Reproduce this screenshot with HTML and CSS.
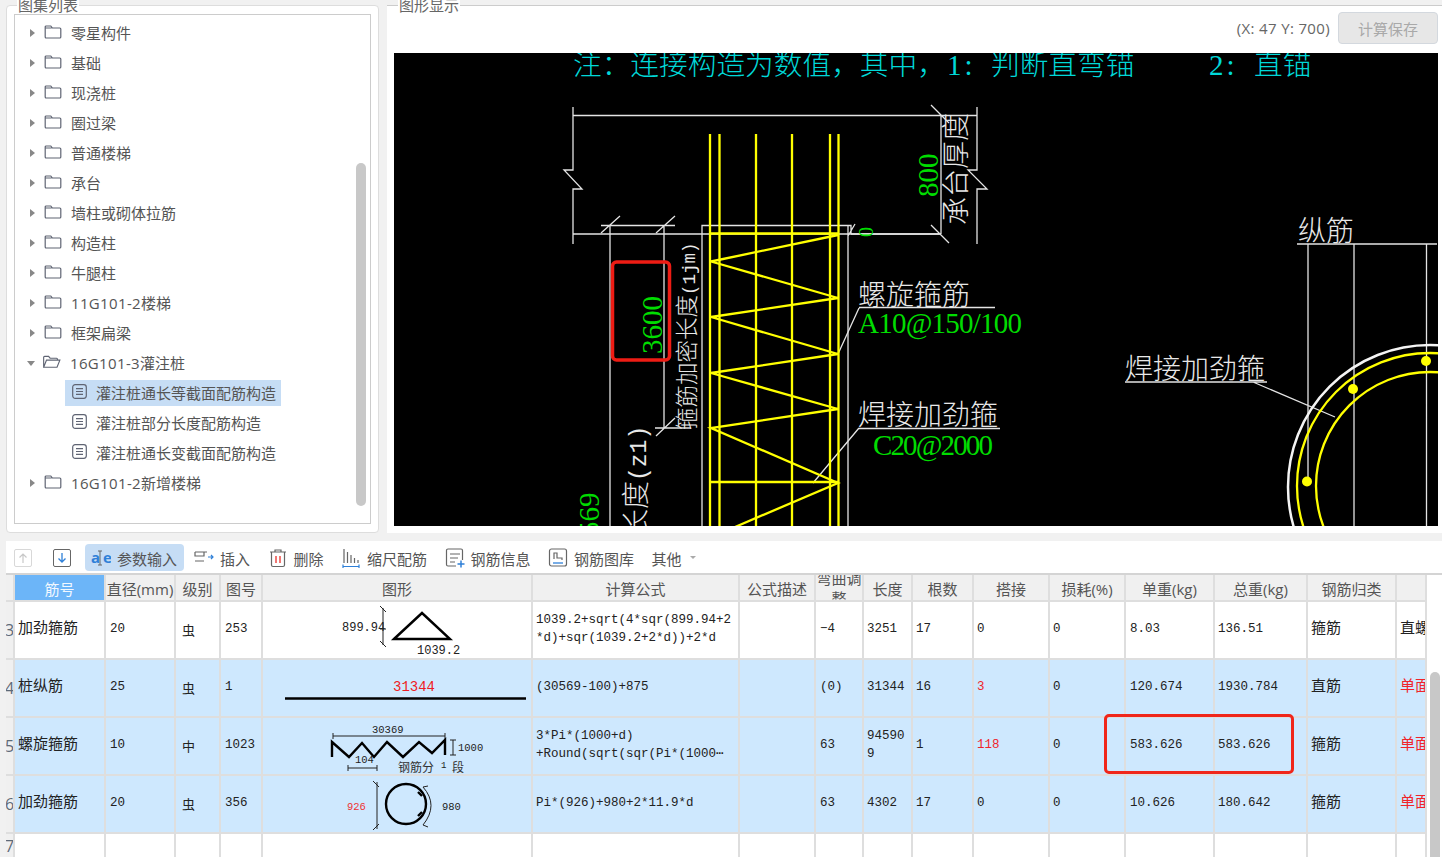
FILE: index.html
```html
<!DOCTYPE html>
<html lang="zh">
<head>
<meta charset="utf-8">
<title>图集列表</title>
<link rel="stylesheet" href="styles.css">
</head>
<body>
<svg class="sprite" width="0" height="0">
  <symbol id="folder" viewBox="0 0 17 14"><path d="M.7 2a1 1 0 0 1 1-1h4.600l1.600 2h7.400a1 1 0 0 1 1 1v8a1 1 0 0 1-1 1H1.700a1 1 0 0 1-1-1zM.7 3h6.500" fill="none" stroke="#5f6473" stroke-width="1.200"/></symbol>
  <symbol id="folder-open" viewBox="0 0 19 14"><path d="M.7 12V2a1 1 0 0 1 1-1h4.200l1.600 2h6.800a1 1 0 0 1 1 1v1M.7 12.500l3-7.500H17.800l-3 7.500z" fill="none" stroke="#5f6473" stroke-width="1.200"/></symbol>
  <symbol id="doc" viewBox="0 0 15 15"><rect x=".7" y=".7" width="13.600" height="13.600" rx="2.500" fill="none" stroke="#5f6473" stroke-width="1.200"/><path d="M4 4.700h7M4 7.500h7M4 10.300h7" stroke="#5f6473" stroke-width="1.200"/></symbol>
</svg>

<div class="top">
  <section class="panel list-panel">
    <h2 class="legend legend-list">图集列表</h2>
    <div class="tree">
      <div class="node"><span class="arrow"></span><svg class="ico-folder"><use href="#folder"/></svg><span class="label">零星构件</span></div>
      <div class="node"><span class="arrow"></span><svg class="ico-folder"><use href="#folder"/></svg><span class="label">基础</span></div>
      <div class="node"><span class="arrow"></span><svg class="ico-folder"><use href="#folder"/></svg><span class="label">现浇桩</span></div>
      <div class="node"><span class="arrow"></span><svg class="ico-folder"><use href="#folder"/></svg><span class="label">圈过梁</span></div>
      <div class="node"><span class="arrow"></span><svg class="ico-folder"><use href="#folder"/></svg><span class="label">普通楼梯</span></div>
      <div class="node"><span class="arrow"></span><svg class="ico-folder"><use href="#folder"/></svg><span class="label">承台</span></div>
      <div class="node"><span class="arrow"></span><svg class="ico-folder"><use href="#folder"/></svg><span class="label">墙柱或砌体拉筋</span></div>
      <div class="node"><span class="arrow"></span><svg class="ico-folder"><use href="#folder"/></svg><span class="label">构造柱</span></div>
      <div class="node"><span class="arrow"></span><svg class="ico-folder"><use href="#folder"/></svg><span class="label">牛腿柱</span></div>
      <div class="node"><span class="arrow"></span><svg class="ico-folder"><use href="#folder"/></svg><span class="label"><span class="latin">11G101-2</span>楼梯</span></div>
      <div class="node"><span class="arrow"></span><svg class="ico-folder"><use href="#folder"/></svg><span class="label">框架扁梁</span></div>
      <div class="node"><span class="arrow arrow-open"></span><svg class="ico-folder"><use href="#folder-open"/></svg><span class="label"><span class="latin">16G101-3</span>灌注桩</span></div>
      <div class="leaf"><span class="leaf-box selected"><svg class="ico-doc"><use href="#doc"/></svg><span class="label">灌注桩通长等截面配筋构造</span></span></div>
      <div class="leaf"><span class="leaf-box"><svg class="ico-doc"><use href="#doc"/></svg><span class="label">灌注桩部分长度配筋构造</span></span></div>
      <div class="leaf"><span class="leaf-box"><svg class="ico-doc"><use href="#doc"/></svg><span class="label">灌注桩通长变截面配筋构造</span></span></div>
      <div class="node"><span class="arrow"></span><svg class="ico-folder"><use href="#folder"/></svg><span class="label"><span class="latin">16G101-2</span>新增楼梯</span></div>
      <div class="tree-thumb"></div>
    </div>
  </section>

  <section class="panel-view">
    <h2 class="legend legend-view">图形显示</h2>
    <div class="view-bar">
      <span class="coord">(X: 47 Y: 700)</span>
      <button class="save" type="button">计算保存</button>
    </div>
    <svg class="canvas" viewBox="394 53 1044 473" width="1044" height="473">
      <g class="ln">
        <path d="M573 107V170H564L582 189H573V244M573 115.500H977M573 234H941M977 107V170H968L987 189H977V244M941 115V234M931 105L949 123M931 225L949 243"/>
        <path d="M601 225.500H675M610 225V526M664 225V428M601 233L620 216M656 233L675 216M655 428H691M656 436L675 418"/>
        <path d="M702 526V225.500H851V234M848 226V526M848 236L855 224M851 234H941"/>
        <path d="M859 307.500H995M859 308L838 354M859 428.500H1000M859 428L813 483"/>
        <path d="M1297 244H1437M1308 244V481M1354 244V526M1426.500 244V526M1125 382H1267M1253 382L1335 417"/>
      </g>
      <g class="yl">
        <path d="M710 134V526M719.500 134V526M756 134V526M792 134V526M830 134V526M838.500 134V526M710 233.500H838.500M710 482H838.500"/>
        <path d="M838 235L711 261.500L838 298L711 317L838 354L711 373L838 409L711 428L838 483L735 527"/>
        <circle cx="1430" cy="486" r="133"/>
        <circle cx="1430" cy="486" r="114"/>
      </g>
      <circle class="wh" cx="1430" cy="487" r="142"/>
      <circle class="dot" cx="1307" cy="481.500" r="5"/>
      <circle class="dot" cx="1353" cy="389" r="5"/>
      <circle class="dot" cx="1426" cy="361" r="5"/>

      <text class="t-cy" x="573" y="75">注&#xFF1A;连接构造为数值&#xFF0C;其中&#xFF0C;</text>
      <text class="t-cy t-cy-num" x="947" y="75">1:</text>
      <text class="t-cy" x="991" y="75">判断直弯锚</text>
      <text class="t-cy t-cy-num" x="1209" y="75">2:</text>
      <text class="t-cy" x="1254" y="75">直锚</text>

      <text class="t-gr" transform="translate(938 197) rotate(-90)">800</text>
      <text class="t-gr" transform="translate(662 354) rotate(-90)">3600</text>
      <text class="t-gr" transform="translate(599 565) rotate(-90)">30569</text>
      <text class="t-gr t-zero" transform="translate(873 237) rotate(-90)">0</text>
      <text class="t-gr" x="858" y="333" textLength="164">A10@150/100</text>
      <text class="t-gr" x="873" y="455" textLength="120">C20@2000</text>

      <text class="t-wh" transform="translate(966 225) rotate(-90)">承台厚度</text>
      <text class="t-wh t-22" transform="translate(695 430) rotate(-90)">箍筋加密长度<tspan class="t-mono18">(1jm)</tspan></text>
      <text class="t-wh" transform="translate(646 537) rotate(-90)">长度<tspan class="t-mono24">(z1)</tspan></text>
      <text class="t-wh" x="858" y="305">螺旋箍筋</text>
      <text class="t-wh" x="858" y="425">焊接加劲箍</text>
      <text class="t-wh" x="1298" y="241">纵筋</text>
      <text class="t-wh" x="1125" y="379">焊接加劲箍</text>

      <rect class="mark" x="612.500" y="262" width="57" height="98" rx="4"/>
    </svg>
  </section>
</div>

<section class="bottom">
  <div class="toolbar">
    <span class="sq sq-off"><svg width="18" height="18" viewBox="0 0 18 18"><path d="M9 14V5M5.500 8.500L9 5l3.500 3.500" fill="none" stroke="#c8c8c8" stroke-width="1.200"/></svg></span>
    <span class="sq sq-on"><svg width="18" height="18" viewBox="0 0 18 18"><path d="M9 4v9M5.500 9.500L9 13l3.500-3.500" fill="none" stroke="#2f80d8" stroke-width="1.300"/></svg></span>
    <span class="tool tool-active">
      <svg class="tool-ico" width="20" height="20" viewBox="0 0 20 20"><text class="ae" x="0" y="15">a</text><text class="ae" x="12" y="15">e</text><path d="M7 3h4M7 17h4M9 3v14" fill="none" stroke="#666" stroke-width="1"/></svg>
      <span>参数输入</span>
    </span>
    <span class="tool tool-near">
      <svg class="tool-ico" width="20" height="20" viewBox="0 0 20 20"><path d="M1 4h12M1 4v4h9V4M1 13h9" fill="none" stroke="#666" stroke-width="1.200"/><path d="M14 9h5M17 7l2 2-2 2" fill="none" stroke="#2f80d8" stroke-width="1.200"/></svg>
      <span>插入</span>
    </span>
    <span class="tool">
      <svg class="tool-ico" width="20" height="20" viewBox="0 0 20 20"><path d="M2 4h16M7 4V2h6v2M3.500 4v13a1.500 1.500 0 0 0 1.500 1.500h10a1.500 1.500 0 0 0 1.500-1.500V4" fill="none" stroke="#666" stroke-width="1.200"/><path d="M8 8v7M12 8v7" stroke="#e8302a" stroke-width="1.300"/></svg>
      <span>删除</span>
    </span>
    <span class="tool">
      <svg class="tool-ico" width="20" height="20" viewBox="0 0 20 20"><path d="M3 1v14M6.500 4v11M10 7v8M13.500 10v5M17 12v3" stroke="#666" stroke-width="1.200"/><path d="M2 18.500h16M2 16.500v4M18 16.500v4" stroke="#2f80d8" stroke-width="1.200"/></svg>
      <span>缩尺配筋</span>
    </span>
    <span class="tool">
      <svg class="tool-ico" width="20" height="20" viewBox="0 0 20 20"><path d="M11 18H3a1.500 1.500 0 0 1-1.500-1.500v-14A1.500 1.500 0 0 1 3 1h13a1.500 1.500 0 0 1 1.500 1.500V12" fill="none" stroke="#666" stroke-width="1.200"/><path d="M5 6h10M5 10h8M5 14h5" stroke="#666" stroke-width="1.200"/><path d="M12.500 16h7M16 12.500v7" stroke="#2f80d8" stroke-width="1.500"/></svg>
      <span>钢筋信息</span>
    </span>
    <span class="tool">
      <svg class="tool-ico" width="20" height="20" viewBox="0 0 20 20"><rect x="1.500" y="1" width="17" height="17" rx="2" fill="none" stroke="#666" stroke-width="1.200"/><path d="M6 11V5h3v5h5v2" fill="none" stroke="#666" stroke-width="1.200"/><path d="M5 15h10" stroke="#2f80d8" stroke-width="1.300"/></svg>
      <span>钢筋图库</span>
    </span>
    <span class="tool tool-more"><span>其他</span><i class="caret"></i></span>
  </div>

  <div class="grid">
    <div class="row head">
      <div class="c"></div><div class="c c-key">筋号</div><div class="c">直径(mm)</div><div class="c">级别</div><div class="c">图号</div><div class="c">图形</div><div class="c">计算公式</div><div class="c">公式描述</div><div class="c c-wrap">弯曲调整</div><div class="c">长度</div><div class="c">根数</div><div class="c">搭接</div><div class="c">损耗(%)</div><div class="c">单重(kg)</div><div class="c">总重(kg)</div><div class="c">钢筋归类</div><div class="c"></div>
    </div>

    <div class="row body-row">
      <div class="c n">3</div><div class="c zh">加劲箍筋</div><div class="c m p4">20</div><div class="c sym">虫</div><div class="c m p4">253</div>
      <div class="c fig"><svg class="figure" viewBox="263 602 268 56" width="268" height="56">
        <text class="f-t" x="342" y="631">899.94</text>
        <path class="f-thin" d="M383 608V645M380 606L386 612M380 641L386 647M380 629H386"/>
        <path class="f-bold" d="M394 639L422 613L450 639Z"/>
        <text class="f-t" x="417" y="654">1039.2</text>
      </svg></div>
      <div class="c m p3"><span>1039.2+sqrt(4*sqr(899.94+2<br>*d)+sqr(1039.2+2*d))+2*d</span></div><div class="c"></div><div class="c m p4">−4</div><div class="c m p3">3251</div><div class="c m p3">17</div><div class="c m p3">0</div><div class="c m p3">0</div><div class="c m p4">8.03</div><div class="c m p3">136.51</div><div class="c zh">箍筋</div><div class="c zh clip">直螺纹</div>
    </div>

    <div class="row body-row sel">
      <div class="c n">4</div><div class="c zh">桩纵筋</div><div class="c m p4">25</div><div class="c sym">虫</div><div class="c m p4">1</div>
      <div class="c fig"><svg class="figure" viewBox="263 660 268 56" width="268" height="56">
        <text class="f-red" x="393" y="691">31344</text>
        <path class="f-bold" d="M285 698.500H526"/>
      </svg></div>
      <div class="c m p3">(30569-100)+875</div><div class="c"></div><div class="c m p4">(0)</div><div class="c m p3">31344</div><div class="c m p3">16</div><div class="c m p3 red">3</div><div class="c m p3">0</div><div class="c m p4">120.674</div><div class="c m p3">1930.784</div><div class="c zh">直筋</div><div class="c zh clip red">单面焊</div>
    </div>

    <div class="row body-row sel">
      <div class="c n">5</div><div class="c zh">螺旋箍筋</div><div class="c m p4">10</div><div class="c sym">中</div><div class="c m p4">1023</div>
      <div class="c fig"><svg class="figure" viewBox="263 718 268 56" width="268" height="56">
        <text class="f-s" x="372" y="733">30369</text>
        <path class="f-thin" d="M333 736H445M333 733V739M445 733V739"/>
        <path class="f-bold" d="M332 757V742L349 757L362 743L374 757L387 742L403 757L419 742L432 753L445 740V755"/>
        <path class="f-thin" d="M453 740V755M450 740H456M450 755H456M348 768H377M348 765V771M377 765V771"/>
        <text class="f-s" x="458" y="751">1000</text>
        <text class="f-s" x="355" y="763">104</text>
        <text class="f-zh" x="398" y="772">钢筋分</text>
        <text class="f-xs" x="441" y="768">1</text>
        <text class="f-zh" x="452" y="772">段</text>
      </svg></div>
      <div class="c m p3"><span>3*Pi*(1000+d)<br>+Round(sqrt(sqr(Pi*(1000⋯</span></div><div class="c"></div><div class="c m p4">63</div><div class="c m p3 brk"><span>94590<br>9</span></div><div class="c m p3">1</div><div class="c m p3 red">118</div><div class="c m p3">0</div><div class="c m p4">583.626</div><div class="c m p3">583.626</div><div class="c zh">箍筋</div><div class="c zh clip red">单面焊</div>
    </div>

    <div class="row body-row sel">
      <div class="c n">6</div><div class="c zh">加劲箍筋</div><div class="c m p4">20</div><div class="c sym">虫</div><div class="c m p4">356</div>
      <div class="c fig"><svg class="figure" viewBox="263 776 268 56" width="268" height="56">
        <text class="f-s f-s-red" x="347" y="810">926</text>
        <path class="f-thin" d="M377 782V829M373 781L379 787M373 830L379 824"/>
        <circle class="f-bold" cx="406" cy="804" r="20"/>
        <path class="f-thin" d="M423 787Q439 805 423 825M423 787L428 786M423 825L428 827"/>
        <path class="f-bold" d="M418 792L422 796M418 816L422 812"/>
        <text class="f-s" x="442" y="810">980</text>
      </svg></div>
      <div class="c m p3">Pi*(926)+980+2*11.9*d</div><div class="c"></div><div class="c m p4">63</div><div class="c m p3">4302</div><div class="c m p3">17</div><div class="c m p3">0</div><div class="c m p3">0</div><div class="c m p4">10.626</div><div class="c m p3">180.642</div><div class="c zh">箍筋</div><div class="c zh clip red">单面焊</div>
    </div>

    <div class="row empty">
      <div class="c n">7</div><div class="c"></div><div class="c"></div><div class="c"></div><div class="c"></div><div class="c"></div><div class="c"></div><div class="c"></div><div class="c"></div><div class="c"></div><div class="c"></div><div class="c"></div><div class="c"></div><div class="c"></div><div class="c"></div><div class="c"></div><div class="c"></div>
    </div>
  </div>

  <div class="weight-mark"></div>
  <div class="grid-thumb"></div>
</section>
</body>
</html>
```
FILE: styles.css
```css
* { box-sizing: border-box; }
html, body { margin: 0; padding: 0; }
body {
  width: 1442px;
  height: 857px;
  overflow: hidden;
  background: #f1f1f1;
  font-family: "Open Sans", "Noto Sans CJK SC", sans-serif;
  font-size: 15px;
  color: #555;
}
.sprite { position: absolute; }

/* top area */
.top { display: flex; gap: 8px; height: 533px; padding: 5px 0 0 6px; }
.panel {
  position: relative;
  width: 373px;
  padding: 8px 7px;
  background: #fff;
  border: 1px solid #ddd;
  border-radius: 4px;
}
.panel-view {
  position: relative;
  flex: 1;
  padding: 0 4px 7px 7px;
  background: #fff;
  border-top: 1px solid #ccc;
}
.legend {
  position: absolute;
  margin: 0;
  padding: 0 1px;
  background: #fff;
  font-size: 15px;
  font-weight: 400;
  line-height: 20px;
  color: #666;
}
.legend-list { top: -11px; left: 10px; }
.legend-view { top: -11px; left: 11px; }

.tree {
  position: relative;
  height: 100%;
  padding-top: 3px;
  border: 1px solid #ccc;
}
.node, .leaf { display: flex; align-items: center; height: 30px; white-space: nowrap; }
.label { margin-top: -2px; }
.latin { letter-spacing: .35px; }
.arrow {
  width: 0;
  height: 0;
  margin: 0 9px 0 15px;
  border-left: 5px solid #888;
  border-top: 4px solid transparent;
  border-bottom: 4px solid transparent;
}
.arrow-open {
  margin: 0 8px 0 12px;
  border-left: 4px solid transparent;
  border-right: 4px solid transparent;
  border-top: 5px solid #888;
  border-bottom: 0;
}
.ico-folder { width: 18px; height: 14px; margin: -2px 9px 0 0; }
.leaf { padding-left: 50px; }
.leaf-box { display: inline-flex; align-items: center; gap: 9px; height: 26px; padding: 0 5px 0 7px; }
.leaf-box.selected { background: #c6ddf5; }
.ico-doc { width: 15px; height: 15px; margin-top: -3px; }
.tree-thumb {
  position: absolute;
  top: 148px;
  left: 341px;
  width: 10px;
  height: 343px;
  background: #c8c8c8;
  border-radius: 5px;
}

.view-bar { display: flex; justify-content: flex-end; align-items: center; gap: 8px; height: 47px; padding-bottom: 3px; }
.coord { font-size: 15px; letter-spacing: .35px; color: #666; }
.save {
  width: 100px;
  height: 32px;
  padding: 0;
  background: #e7e7e7;
  border: 1px solid #d3d8de;
  border-radius: 4px;
  font: inherit;
  color: #a9a9a9;
}
.canvas { display: block; background: #000; }

/* drawing */
.ln path { fill: none; stroke: #e4e4e4; stroke-width: 1.300; }
.yl path, .yl circle { fill: none; stroke: #ffff00; stroke-width: 2.300; }
.wh { fill: none; stroke: #f4f4f4; stroke-width: 2.500; }
.dot { fill: #ffff00; }
.mark { fill: none; stroke: #ee1c14; stroke-width: 3.500; }
.t-cy { fill: #00d8d8; font-family: "Noto Sans CJK SC", sans-serif; font-size: 28.700px; font-weight: 300; }
.t-cy-num { font-family: "Liberation Serif", serif; font-size: 29px; letter-spacing: 3px; }
.t-gr { fill: #00dc00; font-family: "Liberation Serif", serif; font-size: 29px; }
.t-zero { font-size: 20px; }
.t-wh { fill: #e8e8e8; font-family: "Noto Sans CJK SC", sans-serif; font-size: 28px; font-weight: 300; }
.t-22 { font-size: 22.500px; }
.t-mono18 { font-family: "Liberation Mono", monospace; font-size: 17.500px; }
.t-mono24 { font-family: "Liberation Mono", monospace; font-size: 23px; }

/* bottom area */
.bottom { position: relative; height: 316px; margin: 8px 0 0 6px; background: #fff; overflow: hidden; }
.toolbar {
  display: flex;
  align-items: center;
  height: 34px;
  padding: 1px 0 0 8px;
  background: #fff;
  border-bottom: 2px solid #d4d4d4;
}
.sq { display: block; width: 18px; height: 18px; border-radius: 2px; border: 1px solid; }
.sq svg { display: block; margin: -1px; }
.sq-off { border-color: #d8d8d8; margin-right: 21px; }
.sq-on { border-color: #666; margin-right: 14px; }
.tool { display: flex; align-items: center; gap: 6px; margin-left: 17.500px; white-space: nowrap; line-height: 20px; }
.tool > span { padding-top: 2px; }
.tool-active {
  width: 99px;
  height: 27px;
  margin-left: 0;
  padding-left: 6px;
  background: #c6ddf5;
  border-radius: 4px;
}
.tool-near { margin-left: 10px; }
.tool-ico { flex: none; }
.ae { fill: #2f80d8; font-family: "Open Sans", sans-serif; font-size: 15px; font-weight: 700; }
.caret { width: 0; height: 0; margin-left: 2px; border-left: 3px solid transparent; border-right: 3px solid transparent; border-top: 3px solid #aaa; }

/* table */
.row {
  display: grid;
  grid-template-columns: 9px 91px 70px 45px 42px 270px 207px 76px 48px 49px 61px 76px 76px 89px 93px 89px 30px;
  width: 1421px;
}
.c {
  display: flex;
  align-items: center;
  min-width: 0;
  overflow: hidden;
  border-right: 2px solid #dedede;
  border-bottom: 2px solid #dedede;
}
.head { height: 27px; }
.head .c { justify-content: center; padding-top: 1px; background: #f0f0f0; color: #555; white-space: nowrap; }
.head .c-key { background: #6cb5f8; color: #f2f8ff; }
.head .c-wrap { padding-top: 0; white-space: normal; text-align: center; line-height: 20px; }
.body-row { height: 58px; }
.empty { height: 23px; }
.empty .c { border-bottom: 0; }
.sel .c { background: #cee8fe; }
.body-row .n, .empty .n, .sel .n {
  justify-content: center;
  background: #f0f0f0;
  font-size: 16px;
  color: #5e6a78;
}
.zh { padding: 0 0 7px 3px; color: #222; white-space: nowrap; }
.m {
  padding-right: 2px;
  padding-bottom: 2px;
  font-family: "Liberation Mono", monospace;
  font-size: 12.500px;
  line-height: 18px;
  color: #222;
  white-space: nowrap;
}
.p3 { padding-left: 3px; }
.p4 { padding-left: 4px; }
.sym { padding: 0 0 2px 6px; font-size: 13px; color: #222; }
.brk { white-space: normal; }
.red { color: #f0242a; }
.clip { overflow: hidden; }
.fig { padding: 0; }
.figure { display: block; flex: none; }

.f-t, .f-red, .f-s, .f-xs { font-family: "Liberation Mono", monospace; fill: #222; }
.f-t { font-size: 12px; }
.f-red { font-size: 14px; fill: #ee1c24; }
.f-s { font-size: 10.500px; }
.f-s-red { fill: #ee3030; }
.f-xs { font-size: 9px; }
.f-zh { font-family: "Noto Sans CJK SC", sans-serif; font-size: 12px; fill: #333; }
.f-thin { fill: none; stroke: #222; stroke-width: 1; }
.f-bold { fill: none; stroke: #000; stroke-width: 2.400; }

.weight-mark {
  position: absolute;
  top: 173px;
  left: 1098px;
  width: 190px;
  height: 60px;
  border: 3px solid #f0261a;
  border-radius: 5px;
}
.grid-thumb {
  position: absolute;
  top: 131px;
  bottom: 0;
  left: 1424px;
  width: 10px;
  background: #c8c8c8;
  border-radius: 5px 5px 0 0;
}
```
